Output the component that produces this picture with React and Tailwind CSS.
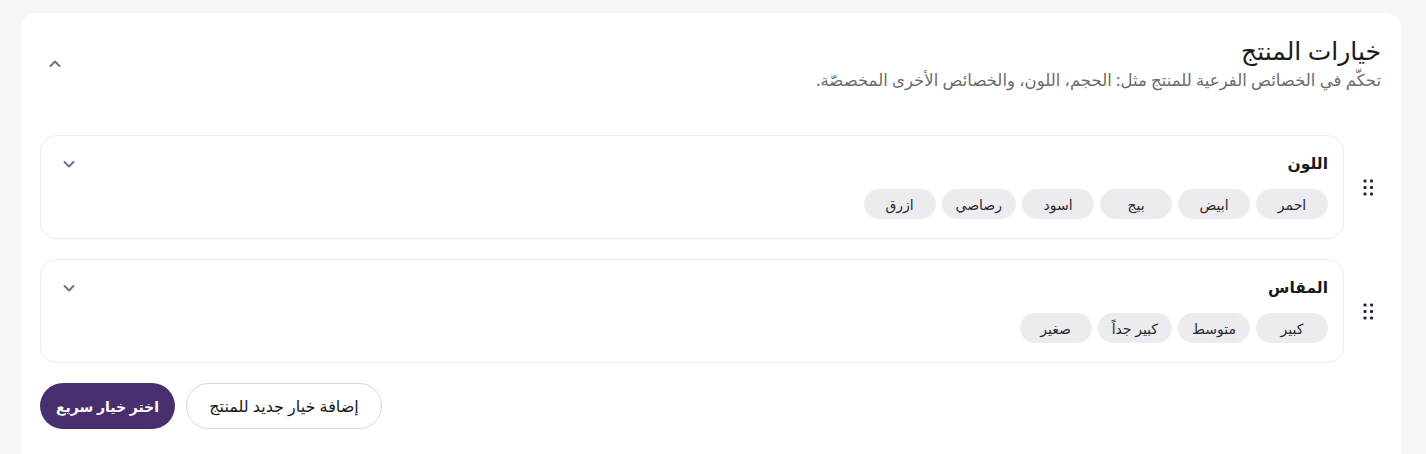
import React from "react";

function Chevron({ up = false, className = "" }) {
  return (
    <svg width="16" height="16" viewBox="0 0 16 16" className={className} fill="none">
      <path d={up ? "M3.5 10L8 5.5L12.5 10" : "M3.5 6L8 10.5L12.5 6"} stroke="#7a6a8f" strokeWidth="2" strokeLinecap="round" strokeLinejoin="round" />
    </svg>
  );
}

function DragHandle() {
  return (
    <svg width="12" height="20" viewBox="0 0 12 20" fill="#2d1b3d">
      <rect x="1.5" y="2.5" width="3" height="3" rx="1" />
      <rect x="8" y="2.5" width="3" height="3" rx="1" />
      <rect x="1.5" y="9" width="3" height="3" rx="1" />
      <rect x="8" y="9" width="3" height="3" rx="1" />
      <rect x="1.5" y="15.5" width="3" height="3" rx="1" />
      <rect x="8" y="15.5" width="3" height="3" rx="1" />
    </svg>
  );
}

function OptionCard({ title, values }) {
  return (
    <div className="flex items-center gap-[11px]">
      <div className="w-[26px] flex justify-center">
        <DragHandle />
      </div>
      <div className="flex-1 h-[104px] rounded-[16px] border border-[#ececef] bg-white pr-[15px] pl-[20px] pt-[15px] flex justify-between">
        <div className="flex flex-col items-start">
          <div className="text-[15.5px] font-bold text-[#1a1a1a] leading-[24px]">{title}</div>
          <div className="flex gap-[6px] mt-[14px]">
            {values.map((v) => (
              <span key={v} className="h-[30px] min-w-[72px] px-[14px] rounded-full bg-[#ecebef] text-[14px] text-[#2a2a2a] flex items-center justify-center">
                {v}
              </span>
            ))}
          </div>
        </div>
        <div className="pt-[5px]">
          <Chevron />
        </div>
      </div>
    </div>
  );
}

export default function App() {
  return (
    <div dir="rtl" className="w-[1426px] h-[454px] overflow-hidden bg-[#f7f7f7] pt-[13px] pr-[25px] pl-[21px]" style={{ fontFamily: '"Noto Sans", "DejaVu Sans", sans-serif' }}>
      <div className="bg-white rounded-[16px] h-[480px] pr-[20px] pl-[19px] pt-[20px]">
        <div className="flex justify-between items-start">
          <div>
            <h1 className="text-[25px] leading-[34px] text-[#1a1a1a]">خيارات المنتج</h1>
            <p className="text-[16.5px] leading-[26px] text-[#6b6b6b] mt-[0px]">تحكّم في الخصائص الفرعية للمنتج مثل: الحجم، اللون، والخصائص الأخرى المخصصّة.</p>
          </div>
          <div className="pt-[23px] pl-[7px]">
            <Chevron up />
          </div>
        </div>
        <div className="mt-[42px] flex flex-col gap-[20px]">
          <OptionCard title="اللون" values={["احمر", "ابيض", "بيج", "اسود", "رصاصي", "ازرق"]} />
          <OptionCard title="المقاس" values={["كبير", "متوسط", "كبير جداً", "صغير"]} />
        </div>
        <div className="mt-[20px] flex justify-end gap-[11px]">
          <button className="h-[46px] w-[196px] rounded-full border border-[#d6d3db] bg-white text-[16px] text-[#1a1a1a]">إضافة خيار جديد للمنتج</button>
          <button className="h-[46px] w-[135px] rounded-full bg-[#4a2f6f] text-[14px] font-bold text-white whitespace-nowrap">اختر خيار سريع</button>
        </div>
      </div>
    </div>
  );
}
